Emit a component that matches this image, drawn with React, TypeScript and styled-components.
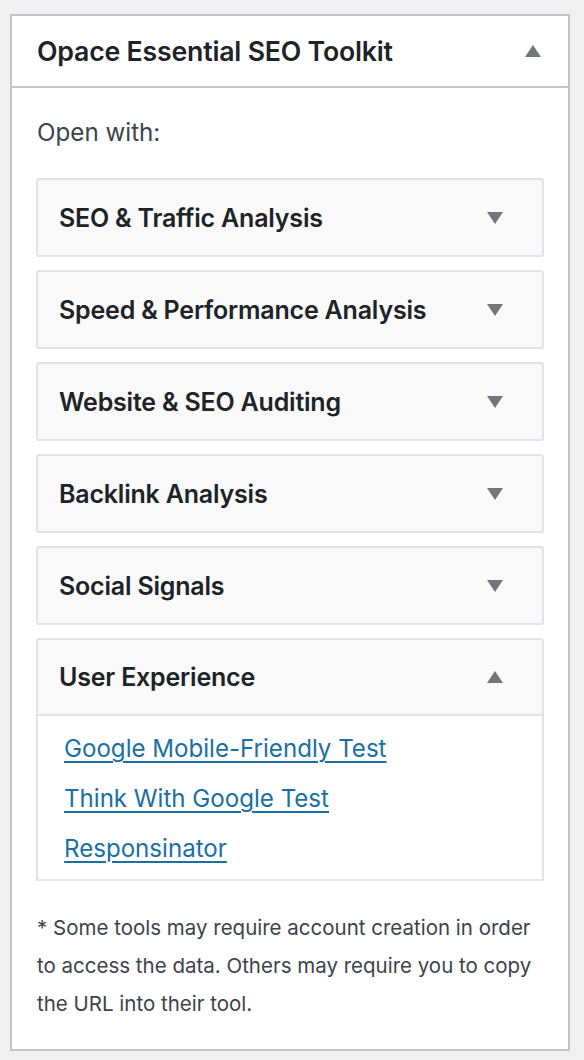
import React from "react";
import styled, { createGlobalStyle } from "styled-components";

const Global = createGlobalStyle`
  html, body { margin: 0; padding: 0; background: #f0f0f1; }
  body { font-family: Inter, "Noto Sans", sans-serif; -webkit-font-smoothing: antialiased; }
  * { box-sizing: border-box; }
`;

const Page = styled.div`
  padding: 14px 14px 11px 10px;
`;

const Card = styled.section`
  width: 560px;
  background: #fff;
  border: 2px solid #c3c4c7;
`;

const Header = styled.header`
  height: 72px;
  display: flex;
  align-items: center;
  justify-content: space-between;
  padding: 0 27px 0 25px;
  border-bottom: 2px solid #c3c4c7;
`;

const Title = styled.h2`
  margin: 0;
  font-size: 26.7px;
  font-weight: 600;
  color: #1d2327;
  letter-spacing: -0.2px;
`;

const Body = styled.div`
  padding: 25px 24px 26px 24px;
`;

const Lead = styled.p`
  margin: 0 0 25px 1px;
  font-size: 24.2px;
  line-height: 40px;
  color: #3c434a;
`;

const List = styled.div`
  display: flex;
  flex-direction: column;
  gap: 13px;
`;

const Item = styled.div``;

const ItemHead = styled.div<{ $open?: boolean }>`
  height: ${(p) => (p.$open ? 78 : 79)}px;
  display: flex;
  align-items: center;
  justify-content: space-between;
  padding: 0 39px 0 21px;
  background: #f9f9f9;
  border: 2px solid #e2e4e7;
  border-radius: ${(p) => (p.$open ? "3px 3px 0 0" : "3px")};
`;

const ItemTitle = styled.span`
  font-size: 25px;
  font-weight: 600;
  color: #1d2327;
  letter-spacing: -0.2px;
`;

const Panel = styled.div`
  padding: 8px 24px 5px 26px;
  border: 2px solid #e2e4e7;
  border-top: none;
  display: flex;
  flex-direction: column;
`;

const Link = styled.a`
  font-size: 24.1px;
  line-height: 50px;
  color: #1a6fa5;
  text-decoration: underline;
  text-decoration-thickness: 2px;
  text-underline-offset: 4px;
  width: fit-content;
`;

const Note = styled.p`
  margin: 28px 0 0 1px;
  font-size: 20.5px;
  line-height: 38px;
  color: #3c434a;
`;

const Arrow = ({ up }: { up?: boolean }) => (
  <svg width="16" height="12" viewBox="0 0 16 12" style={{ flex: "none" }}>
    {up ? (
      <polygon points="8,0 16,12 0,12" fill="#72777c" />
    ) : (
      <polygon points="0,0 16,0 8,12" fill="#72777c" />
    )}
  </svg>
);

const sections = [
  "SEO & Traffic Analysis",
  "Speed & Performance Analysis",
  "Website & SEO Auditing",
  "Backlink Analysis",
  "Social Signals",
];

const links = ["Google Mobile-Friendly Test", "Think With Google Test", "Responsinator"];

export default function App() {
  return (
    <>
      <Global />
      <Page>
        <Card>
          <Header>
            <Title>Opace Essential SEO Toolkit</Title>
            <Arrow up />
          </Header>
          <Body>
            <Lead>Open with:</Lead>
            <List>
              {sections.map((s) => (
                <Item key={s}>
                  <ItemHead>
                    <ItemTitle>{s}</ItemTitle>
                    <Arrow />
                  </ItemHead>
                </Item>
              ))}
              <Item>
                <ItemHead $open>
                  <ItemTitle>User Experience</ItemTitle>
                  <Arrow up />
                </ItemHead>
                <Panel>
                  {links.map((l) => (
                    <Link key={l} href="#">
                      {l}
                    </Link>
                  ))}
                </Panel>
              </Item>
            </List>
            <Note>
              * Some tools may require account creation in order to access the data. Others may require you to copy the URL into their tool.
            </Note>
          </Body>
        </Card>
      </Page>
    </>
  );
}
